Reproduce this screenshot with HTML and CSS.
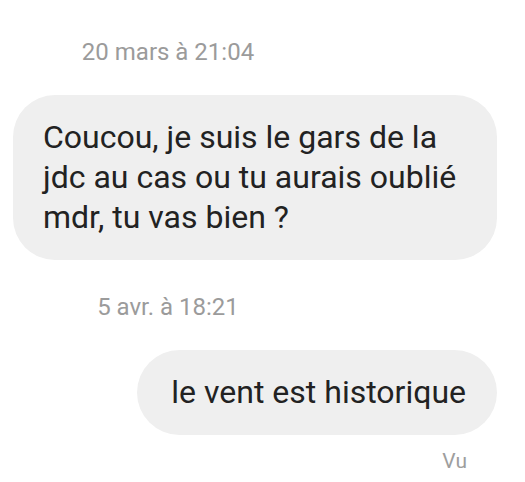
FILE: index.html
```html
<!DOCTYPE html>
<html lang="fr">
<head>
<meta charset="utf-8">
<title>Conversation</title>
<link rel="stylesheet" href="styles.css">
</head>
<body>
<div class="thread">
  <div class="stamp stamp-first">20 mars à 21:04</div>
  <div class="row row-in">
    <div class="bubble bubble-in">Coucou, je suis le gars de la jdc au cas ou tu aurais oublié mdr, tu vas bien ?</div>
  </div>
  <div class="stamp stamp-second">5 avr. à 18:21</div>
  <div class="row row-out">
    <div class="bubble bubble-out">le vent est historique</div>
  </div>
  <div class="seen">Vu</div>
</div>
</body>
</html>
```

FILE: styles.css
```css
html, body {
  margin: 0;
  padding: 0;
  background: #ffffff;
}
body {
  font-family: Roboto, "Noto Sans", sans-serif;
  width: 525px;
  height: 482px;
  overflow: hidden;
}
.thread {
  display: flex;
  flex-direction: column;
  padding: 38px 28px 0 13px;
}
.stamp {
  width: 310px;
  text-align: center;
  font-size: 24px;
  line-height: 28px;
  color: #9b9b9b;
}
.row {
  display: flex;
}
.row-in {
  margin-top: 29px;
  justify-content: flex-start;
}
.row-out {
  margin-top: 29px;
  justify-content: flex-end;
}
.bubble {
  background: #efefef;
  color: #222222;
  font-size: 32px;
  line-height: 40px;
}
.bubble-in {
  width: 484px;
  box-sizing: border-box;
  padding: 22px 30px 23px 30px;
  border-radius: 42px;
}
.stamp-second {
  margin-top: 33px;
}
.bubble-out {
  padding: 22px 31px 23px 34px;
  border-radius: 43px;
}
.seen {
  align-self: flex-end;
  margin-right: 30px;
  margin-top: 14px;
  font-size: 21px;
  line-height: 24px;
  color: #9e9e9e;
}
```
